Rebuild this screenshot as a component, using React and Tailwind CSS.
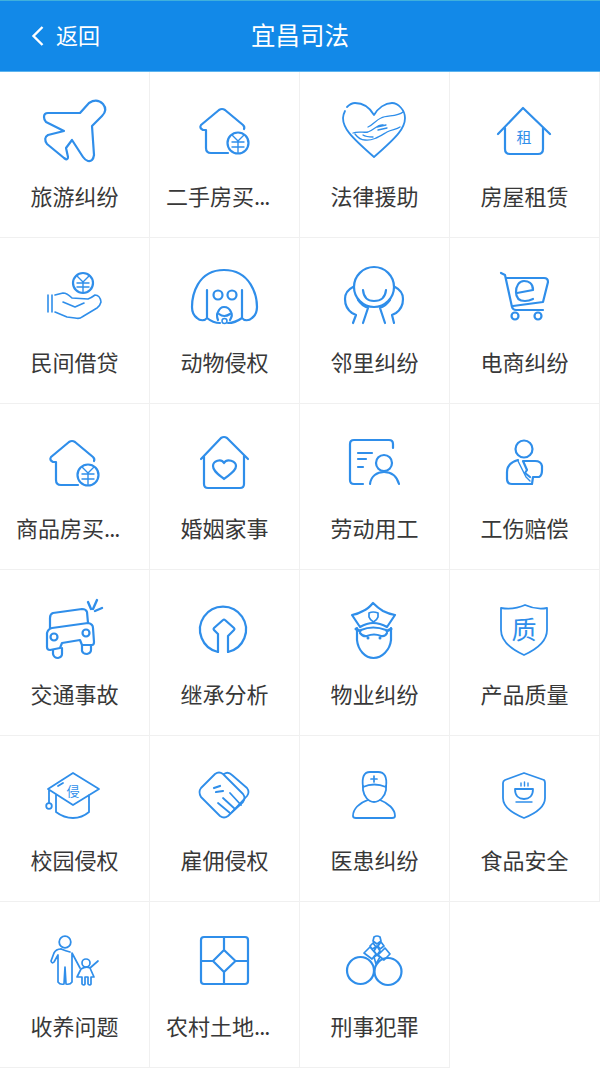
import React from "react";

const TEXT = { fontFamily: '"Noto Sans CJK SC", sans-serif' };
const BLUE = "#2f8eea";

const yenHouse = (
  <>
    <path d="M228 153H211Q206 153 206 148V130H203Q199 128 201 125L219 110Q222 108 225 110L243 125Q245 127 244 129" />
    <circle cx="238" cy="143" r="10.5" />
    <path strokeWidth="1.4" d="M232 135L238 141L244 135M232 142H244M232 147H244M238 141V153" />
  </>
);

const items = [
  { t: "旅游纠纷", vb: "35 91 80 80", c: <path d="M44 117Q44 113 48 113H80L89 103Q97 98 103 104Q108 110 102 116L92 126L94 155Q93 162 88 161Q85 160 83 157L72 140L66 148L68 157Q68 161 64 158L47 144Q43 138 48 135L64 131L46 122Q44 120 44 117Z" /> },
  { t: "二手房买", more: true, vb: "185 91 80 80", c: yenHouse },
  { t: "法律援助", vb: "335 91 80 80", c: (
    <>
      <path strokeWidth="1.800" d="M374 115C370 108 363 103 355 103C351 103 349 105 347 107M345 111C344 113 343 115 343 118C343 128 350 136 374 157C398 136 405 128 405 118C405 110 398 103 392 103C385 103 378 108 374 115" />
      <path strokeWidth="1.300" d="M353 133C358 131 364 133 368 132C374 130 378 124 383 125M368 127C373 125 376 120 381 118C387 115 397 117 403 112M355 134C358 138 361 140 365 140C373 141 380 136 387 132C392 129 396 130 400 127M363 135C366 137 370 137 373 137M377 127L386 125M378 130L387 128" />
    </>
  ) },
  { t: "房屋租赁", vb: "485 91 80 80", c: (
    <>
      <path d="M498 134L523 108L550 134M505 128V149Q505 154 510 154H538Q543 154 543 149V128" />
      <text x="524" y="142.5" fontSize="15" textAnchor="middle" fill={BLUE} stroke="none" style={TEXT}>租</text>
    </>
  ) },
  { t: "民间借贷", vb: "35 257 80 80", c: (
    <>
      <circle cx="83" cy="283" r="10" />
      <path strokeWidth="1.4" d="M77 276L83 282L89 276M77 283H89M77 287H89M83 282V292" />
      <path strokeWidth="1.6" d="M48 295V312M52 295V312M55 295L63 293Q67 293 72 298L88 299Q91 298 95 295Q100 295 101 302Q100 306 97 308L82 317Q80 319 75 318L67 317L55 312M63 302L75 307L84 303" />
    </>
  ) },
  { t: "动物侵权", vb: "185 257 80 80", c: (
    <>
      <path d="M207 318C205 321 200 321 197 318C193 315 192 312 192 307C192 296 197 270 224 270C251 270 257 296 257 307C257 312 256 315 252 318C249 321 244 321 242 318M207 318V290M242 318V290M207 318Q213 323 220 323M242 318Q235 323 228 323" />
      <circle cx="218" cy="295" r="4.5" />
      <circle cx="232" cy="295" r="4.5" />
      <path d="M218 320Q216 315 218 312Q220 307 224 307Q229 307 231 312Q233 315 230 320" />
      <path d="M219 314Q224 318 230 314" />
      <circle cx="224.500" cy="321" r="2.500" strokeWidth="1.500" />
    </>
  ) },
  { t: "邻里纠纷", vb: "335 257 80 80", c: (
    <>
      <circle cx="374" cy="287" r="20" />
      <path d="M363 290Q364 301 374 301Q385 301 386 290M353 287Q345 291 345 299Q345 308 352 313L356 315L353 323M358 300Q362 306 368 308L363 323M395 287Q403 291 403 299Q403 308 396 313L392 315L394 323M390 300Q386 306 380 308L385 323" />
    </>
  ) },
  { t: "电商纠纷", vb: "485 257 80 80", c: (
    <>
      <path d="M501 273L505 275L512 307Q513 310 516 310H543M507 278H544Q548 278 548 282L543 302L513 306" />
      <path d="M517 293L533 290C533 283 528 281 524 281C519 281 516 286 516 292C516 299 520 301 525 301C528 301 531 300 533 299" />
      <circle cx="515" cy="316" r="3.500" />
      <circle cx="538" cy="316" r="3.500" />
    </>
  ) },
  { t: "商品房买", more: true, vb: "185 91 80 80", c: yenHouse },
  { t: "婚姻家事", vb: "185 423 80 80", c: (
    <>
      <path d="M201 459L221 438Q224 436 227 438L248 459M204 456V484Q204 488 208 488H240Q244 488 244 484V456" />
      <path d="M224 479C218 474 213 471 213 466C213 461 221 458 224 463C227 458 236 461 236 466C236 471 230 474 224 479Z" />
    </>
  ) },
  { t: "劳动用工", vb: "335 423 80 80", c: (
    <>
      <path d="M393 448V444Q393 440 389 440H354Q350 440 350 444V480Q350 484 354 484H363" />
      <path d="M358 453H372M358 459H366M358 467H363" />
      <circle cx="384" cy="463" r="8" />
      <path d="M370 484C371 476 377 472 384 472C392 472 397 477 399 484" />
    </>
  ) },
  { t: "工伤赔偿", vb: "485 423 80 80", c: (
    <>
      <circle cx="524" cy="449" r="8.500" />
      <path d="M518 460Q507 463 507 472V479Q507 484 512 484H532L533 477H539Q542 476 542 470V466Q541 461 535 461H523L527 470L525 473L530 477" />
      <path strokeWidth="1.400" d="M518 461L523 471L526 477L530 481" />
    </>
  ) },
  { t: "交通事故", vb: "35 589 80 80", c: (
    <>
      <path d="M50 628V618Q50 614 53 613L82 609Q86 609 87 612L88 623" />
      <path d="M47 633Q48 629 52 628L88 623Q93 624 93 628L94 642Q94 645 92 645H82L80 640L62 643L60 648L50 650Q47 650 47 647Z" />
      <circle cx="54" cy="637" r="3.500" />
      <circle cx="86" cy="633" r="3.500" />
      <path d="M53 650V654Q54 658 58 658Q62 657 62 654V648M82 645V651Q83 654 87 654Q91 653 91 650V645" />
      <path strokeWidth="2.400" d="M88 602L91 609M97 600L93 609M102 608L95 611" />
    </>
  ) },
  { t: "继承分析", vb: "185 589 80 80", c: (
    <>
      <path d="M218 652A23 23 0 1 1 228 652" />
      <path d="M218 652V634L214 630Q213 629 214 628L223 620Q224 619 225 620L234 628Q235 629 234 630L228 636V652" />
    </>
  ) },
  { t: "物业纠纷", vb: "335 589 80 80", c: (
    <>
      <path d="M373 603Q368 609 363 611Q358 614 352 615Q356 621 360 627Q367 623 373 623Q380 623 387 627Q391 621 395 615Q389 614 383 611Q378 608 373 603Z" />
      <path strokeWidth="1.700" d="M369 613Q373 611 378 613V617Q377 620 373.500 622Q370 620 369 617Z" />
      <path d="M361 630Q373 625 386 630" />
      <path d="M357 628V640C358 650 365 658 373.500 658C382 658 390 650 391 640V628M360 633Q363 637 367 636Q374 633 381 636Q385 637 387 633" />
      <path strokeWidth="3" d="M356 629L360 631M391 629L387 631" />
      <circle cx="368" cy="638" r="1.500" fill={BLUE} stroke="none" />
      <circle cx="380" cy="638" r="1.500" fill={BLUE} stroke="none" />
    </>
  ) },
  { t: "产品质量", vb: "485 589 80 80", c: (
    <>
      <path strokeWidth="1.800" d="M501 608Q514 610 525 605Q536 610 547 608V630C547 642 535 650 524 655C513 650 501 642 501 630Z" />
      <text x="524" y="639" fontSize="25" textAnchor="middle" fill={BLUE} stroke="none" style={TEXT}>质</text>
    </>
  ) },
  { t: "校园侵权", vb: "35 755 80 80", c: (
    <>
      <path strokeWidth="1.800" d="M73 773L48 789L73 805L99 789ZM56 795V812Q64 818 73 818Q82 818 89 812V795M49 790V803M58 786L63 783" />
      <circle cx="49" cy="806" r="2.800" strokeWidth="1.800" />
      <text x="73" y="796" fontSize="13" textAnchor="middle" fill={BLUE} stroke="none" style={TEXT}>侵</text>
    </>
  ) },
  { t: "雇佣侵权", vb: "185 755 80 80", c: (
    <>
      <path strokeWidth="1.800" strokeLinejoin="round" d="M201 788L215 774Q219 771 223 774L243 794Q246 798 243 802L228 816Q224 819 220 816L201 797Q198 792 201 788Z" />
      <path strokeWidth="1.800" d="M224 774Q228 771 232 775L247 788Q250 792 247 796L232 812" />
      <path strokeWidth="1.800" d="M218 803L230 813M223 798L235 809M230 793L241 805" />
      <path strokeWidth="2.200" d="M214 788L220 786M216 792L223 791" />
    </>
  ) },
  { t: "医患纠纷", vb: "335 755 80 80", c: (
    <>
      <path strokeWidth="1.800" d="M363 787Q361 772 370 772H378Q388 772 386 787Q374 782 363 787Z" />
      <path strokeWidth="1.800" d="M363 786V790C364 796 368 802 374 802C380 802 385 796 386 790V786" />
      <path strokeWidth="1.800" d="M368 800C359 803 353 809 353 816Q353 818 356 818H392Q395 818 395 816C395 809 388 803 380 800" />
      <path strokeWidth="1.700" d="M374 776V782M371 779H377" />
    </>
  ) },
  { t: "食品安全", vb: "485 755 80 80", c: (
    <>
      <path strokeWidth="1.800" d="M524 773L544 780Q545 781 545 783V798C545 807 534 814 524 818C514 814 503 807 503 798V783Q503 781 505 780Z" />
      <path strokeWidth="1.800" d="M515 789H533C533 796 529 799 524 799C519 799 515 796 515 789Z" />
      <path strokeWidth="1.400" d="M516 802H532M521 786V783M524.500 786V782M528 786V783" />
    </>
  ) },
  { t: "收养问题", vb: "35 921 80 80", c: (
    <>
      <circle cx="65" cy="942" r="5.800" strokeWidth="1.800" />
      <path strokeWidth="1.700" d="M61 949Q56 949 54 953L51 961Q52 964 54 962L58 955V982Q60 985 64 984L65 967L66 984Q70 985 72 982V953L80 968" />
      <circle cx="86" cy="963" r="4" strokeWidth="1.700" />
      <path strokeWidth="1.700" d="M81 969L77 977H82V984Q84 986 85 984V977H88V984Q90 986 91 984V977H94L90 968L98 961M81 969Q86 966 90 968M70 952Q66 951 61 949" />
    </>
  ) },
  { t: "农村土地", more: true, vb: "185 921 80 80", c: (
    <>
      <rect x="201" y="937" width="47" height="47" rx="3" />
      <path d="M224 950L235.500 961L224 972L213 961ZM224 937V950M224 972V984M201 961H213M236 961H248" />
    </>
  ) },
  { t: "刑事犯罪", vb: "335 921 80 80", c: (
    <>
      <circle cx="360.500" cy="970.500" r="13.500" />
      <circle cx="388" cy="971.500" r="13.500" />
      <path strokeWidth="1.700" strokeLinejoin="round" d="M364 953L370 947L376 954L372 959ZM378 955L385 948L390 954L384 960ZM374 937Q377 935 380 937L381 941L377 944L373 941ZM373 943L376 947L372 949L370 946ZM381 942L384 946L380 949L378 946ZM377 946L380 951L377 955L374 951ZM374 957L377 955L380 957L376 964Z" />
    </>
  ) },
];

export default function App() {
  return (
    <div className="w-[600px] min-h-[1073px] bg-white" style={TEXT}>
      <header className="h-[72px] bg-[#1289e8] border-t border-t-[#3fb0dc] border-b border-b-[#5cb4ee] relative flex items-center text-white">
        <svg width="14" height="20" viewBox="0 0 14 20" className="ml-[31px]" fill="none" stroke="#fff" strokeWidth="2.400">
          <path d="M11.500 1L2.500 10L11.500 19" />
        </svg>
        <span className="ml-[11px] text-[22px] leading-8 -translate-y-[2px]">返回</span>
        <h1 className="absolute left-0 right-0 text-center text-[24.500px] font-normal leading-8 -translate-y-[1px]">宜昌司法</h1>
      </header>
      <div className="grid grid-cols-4">
        {items.map((it) => (
          <div key={it.t} className="h-[166px] flex flex-col items-center border-r border-b border-[#f0f0f0]">
            <svg
              className="mt-[19px] w-20 h-20 shrink-0"
              viewBox={it.vb}
              fill="none"
              stroke={BLUE}
              strokeWidth="2.200"
              strokeLinecap="round"
              strokeLinejoin="round"
            >
              {it.c}
            </svg>
            <span
              className={
                it.more
                  ? "mt-2 self-start ml-4 text-[22px] leading-8 text-[#383838] whitespace-nowrap"
                  : "mt-2 text-[22px] leading-8 text-[#383838] whitespace-nowrap"
              }
            >
              {it.t}
              {it.more && <span className="tracking-[-1px]">...</span>}
            </span>
          </div>
        ))}
      </div>
    </div>
  );
}
